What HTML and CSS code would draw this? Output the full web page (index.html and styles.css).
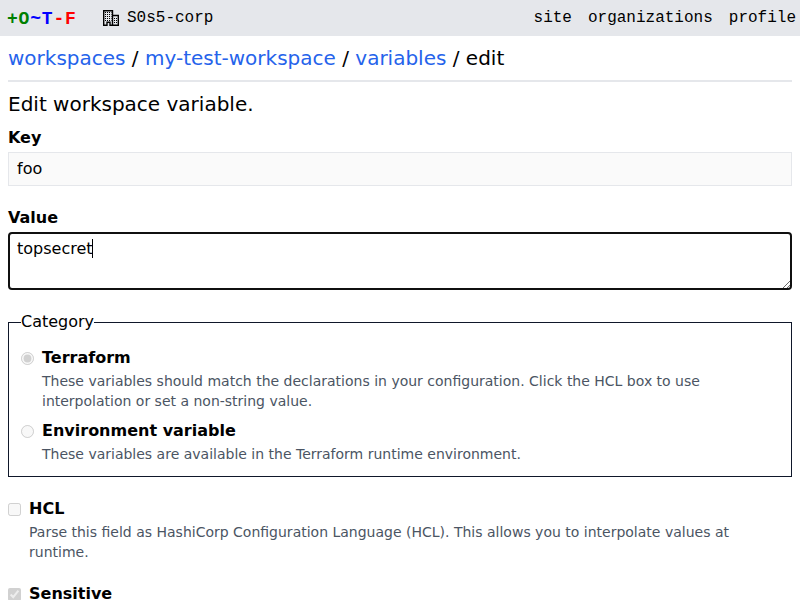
FILE: index.html
```
<!DOCTYPE html>
<html lang="en">
<head>
<meta charset="utf-8">
<title>edit variable</title>
<link rel="stylesheet" href="styles.css">
</head>
<body>
<header class="topbar">
  <a class="logo"><span class="g">+O</span><span class="b">~T</span><span class="r">-F</span></a>
  <a class="org">
    <svg width="16" height="16" viewBox="0 0 16 16" fill="none" stroke="#000"><path d="M.7 15.3V.7h8.800v14.600h-2.500v-3h-3v3zM9.500 5.500h5.800v9.800h-5.800" stroke-width="1.400"/><path d="M2 2.500h6.500M2 4.500h6.500M2 6.500h6.500M2 8.500h6.500M2 10.500h6.500" stroke-dasharray="1 1"/><path d="M11.500 8v1M13.500 8v1M11.500 10v1M13.500 10v1M11.500 12v1M13.500 12v1"/></svg>
    <span>S0s5-corp</span>
  </a>
  <nav class="menu"><a>site</a><a>organizations</a><a>profile</a></nav>
</header>
<main class="content">
  <div class="crumbs"><a>workspaces</a> / <a>my-test-workspace</a> / <a>variables</a> / edit</div>
  <form class="form">
    <div class="title">Edit workspace variable.</div>
    <div class="field"><label>Key</label><input class="text" type="text" value="foo" disabled></div>
    <div class="field"><label>Value</label><div class="area"><span>topsecret</span><i class="caret"></i><svg class="grip" width="8" height="8" viewBox="0 0 8 8"><path d="M1 8L8 1M5 8L8 5" stroke="#444" stroke-width=".8"/></svg></div></div>
    <fieldset class="category">
      <legend>Category</legend>
      <div class="choice"><input type="radio" checked disabled><label>Terraform</label><p>These variables should match the declarations in your configuration. Click the HCL box to use interpolation or set a non-string value.</p></div>
      <div class="choice"><input type="radio" disabled><label>Environment variable</label><p>These variables are available in the Terraform runtime environment.</p></div>
    </fieldset>
    <div class="choice"><input type="checkbox" disabled><label>HCL</label><p>Parse this field as HashiCorp Configuration Language (HCL). This allows you to interpolate values at runtime.</p></div>
    <div class="choice sensitive"><input type="checkbox" checked disabled><label>Sensitive</label></div>
  </form>
</main>
</body>
</html>
```
FILE: styles.css
```
* { box-sizing: border-box; margin: 0; padding: 0; }
body { font: 16px/24px "DejaVu Sans", sans-serif; color: #000; background: #fff; height: 600px; overflow: hidden; }
.topbar { height: 36px; background: #e5e7eb; display: flex; align-items: center; padding: 0 4px 0 7px; font-family: "Liberation Mono", monospace; }
.logo { font: bold 18px/24px "Liberation Mono", monospace; letter-spacing: .8px; width: 96px; padding-top: 2px; }
.g { color: #008000; } .b { color: #00f; } .r { color: #f00; }
.org { display: flex; align-items: center; gap: 8px; }
.menu { margin-left: auto; display: flex; gap: 16px; }
.content { padding: 8px; }
.crumbs { font-size: 20px; line-height: 28px; padding-bottom: 8px; border-bottom: 2px solid #e5e7eb; }
.crumbs a { color: #2563eb; }
.form { padding-top: 8px; display: flex; flex-direction: column; }
.title { font-size: 20px; line-height: 28px; margin-bottom: 8px; }
.field { display: flex; flex-direction: column; gap: 2px; }
.field + .field { margin-top: 20px; }
label { font-weight: bold; }
.text { height: 34px; border: 1px solid #e5e7eb; background: #fafafa; padding: 0 8px 2px; font: inherit; color: #000; }
.area { position: relative; height: 58px; border: 2px solid #101010; border-radius: 4px; padding: 3px 7px; display: flex; }
.caret { width: 1px; height: 19px; margin: 2px 0 0 -1px; background: #000; }
.grip { position: absolute; right: 0; bottom: 0; }
.category { border: 1px solid #0f172a; padding: 12px; margin: 20px 0; }
.choice { display: grid; grid-template-columns: 13px 1fr; column-gap: 8px; row-gap: 1px; align-items: center; }
.choice p { grid-column: 2; font-size: 14px; line-height: 20px; color: #4b5563; }
.choice + .choice { margin-top: 8px; }
.choice + .sensitive { margin-top: 20px; }
.choice input { position: relative; top: .4px; }
```
